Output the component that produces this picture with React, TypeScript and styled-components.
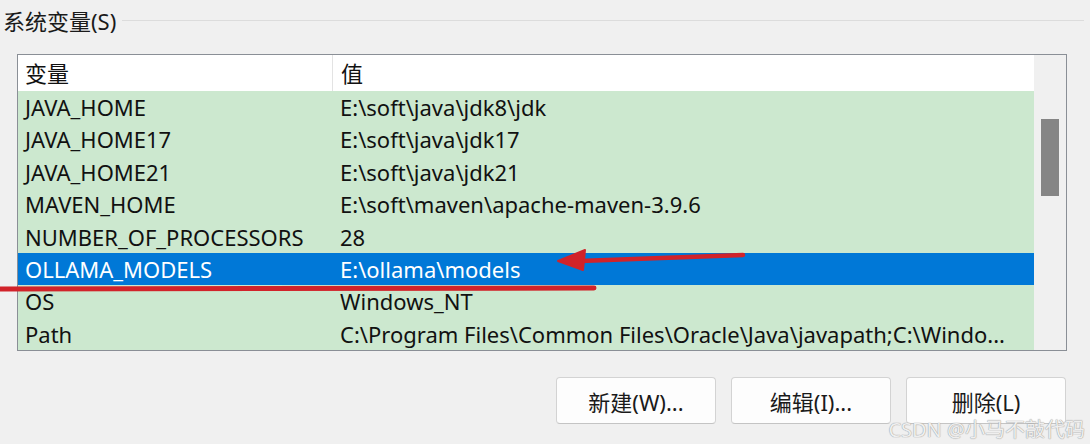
import React from "react";
import styled, { createGlobalStyle } from "styled-components";

const GlobalStyle = createGlobalStyle`
  html, body {
    margin: 0;
    padding: 0;
    background: #f0f0f0;
    width: 1090px;
    height: 444px;
    overflow: hidden;
  }
  * { box-sizing: border-box; }
`;

const FONT = `"Noto Sans", "Noto Sans CJK SC", sans-serif`;

const Page = styled.div`
  position: relative;
  width: 1090px;
  height: 444px;
  padding-top: 7px;
  font-family: ${FONT};
  color: #000;
`;

const GroupHeader = styled.div`
  display: flex;
  align-items: center;
  height: 28px;
  padding-left: 3px;
  padding-right: 6px;
`;

const GroupLabel = styled.span`
  font-size: 22px;
  line-height: 28px;
  color: #1a1a1a;
  white-space: nowrap;
`;

const GroupLine = styled.div`
  flex: 1;
  height: 1px;
  margin-left: 6px;
  margin-top: -2px;
  background: #dcdcdc;
`;

const ListBox = styled.div`
  display: flex;
  margin: 19px 0 0 17px;
  width: 1050px;
  height: 297px;
  border: 1px solid #8a8f96;
  background: #f0f0f0;
`;

const Table = styled.div`
  flex: 1;
  min-width: 0;
  display: flex;
  flex-direction: column;
  background: #cce8cf;
  overflow: hidden;
`;

const HeaderRow = styled.div`
  display: grid;
  grid-template-columns: 314px minmax(0, 1fr);
  height: 36px;
  background: #fff;
  flex-shrink: 0;
`;

const HeaderCell = styled.div<{ $divider?: boolean }>`
  padding-left: ${(p) => (p.$divider ? "8px" : "7px")};
  font-size: 22px;
  line-height: 36px;
  border-left: ${(p) => (p.$divider ? "1px solid #e3e3e3" : "none")};
  color: #111;
`;

const Row = styled.div<{ $selected?: boolean }>`
  display: grid;
  grid-template-columns: 314px minmax(0, 1fr);
  height: 32.375px;
  flex-shrink: 0;
  background: ${(p) => (p.$selected ? "#0078d7" : "transparent")};
  color: ${(p) => (p.$selected ? "#fff" : "#111")};
`;

const Cell = styled.div<{ $second?: boolean }>`
  padding-left: ${(p) => (p.$second ? "8px" : "7px")};
  padding-right: 8px;
  font-size: 22px;
  line-height: 32px;
  white-space: nowrap;
`;

const Scrollbar = styled.div`
  width: 32px;
  flex-shrink: 0;
  background: #f0f0f0;
  padding: 64px 7px 0 7px;
`;

const Thumb = styled.div`
  height: 77px;
  background: #858585;
`;

const ButtonRow = styled.div`
  display: flex;
  justify-content: flex-end;
  gap: 15px;
  margin-top: 26px;
  padding-right: 24px;
`;

const Button = styled.button`
  width: 160px;
  height: 47px;
  background: #fdfdfd;
  border: 1px solid #d3d3d3;
  border-bottom-color: #c4c4c4;
  border-radius: 4px;
  font-family: ${FONT};
  font-size: 22px;
  color: #1a1a1a;
  padding: 0;
`;

const Annotations = styled.svg`
  position: absolute;
  left: 0;
  top: 0;
  width: 1090px;
  height: 444px;
  pointer-events: none;
`;

const Watermark = styled.div`
  position: absolute;
  right: 5px;
  bottom: 2px;
  font-family: ${FONT};
  font-size: 20px;
  line-height: 24px;
  color: #efefef;
  text-shadow: 0 0 1px #9c9c9c, 0 0 1px #9c9c9c;
  white-space: nowrap;
`;

const rows: [string, string][] = [
  ["JAVA_HOME", "E:\\soft\\java\\jdk8\\jdk"],
  ["JAVA_HOME17", "E:\\soft\\java\\jdk17"],
  ["JAVA_HOME21", "E:\\soft\\java\\jdk21"],
  ["MAVEN_HOME", "E:\\soft\\maven\\apache-maven-3.9.6"],
  ["NUMBER_OF_PROCESSORS", "28"],
  ["OLLAMA_MODELS", "E:\\ollama\\models"],
  ["OS", "Windows_NT"],
  ["Path", "C:\\Program Files\\Common Files\\Oracle\\Java\\javapath;C:\\Windo..."],
];

export default function App() {
  return (
    <>
      <GlobalStyle />
      <Page>
        <GroupHeader>
          <GroupLabel>系统变量(S)</GroupLabel>
          <GroupLine />
        </GroupHeader>
        <ListBox>
          <Table>
            <HeaderRow>
              <HeaderCell>变量</HeaderCell>
              <HeaderCell $divider>值</HeaderCell>
            </HeaderRow>
            {rows.map(([k, v]) => (
              <Row key={k} $selected={k === "OLLAMA_MODELS"}>
                <Cell>{k}</Cell>
                <Cell $second>{v}</Cell>
              </Row>
            ))}
          </Table>
          <Scrollbar>
            <Thumb />
          </Scrollbar>
        </ListBox>
        <ButtonRow>
          <Button>新建(W)...</Button>
          <Button>编辑(I)...</Button>
          <Button>删除(L)</Button>
        </ButtonRow>
        <Annotations viewBox="0 0 1090 444">
          <path d="M -2 289 L 594 288" stroke="#d1232a" strokeWidth="5" strokeLinecap="round" fill="none" />
          <path d="M 743 255 L 580 261" stroke="#d1232a" strokeWidth="4.5" strokeLinecap="round" fill="none" />
          <path d="M 558 261 L 585 250 L 583 270 Z" fill="#d1232a" stroke="#d1232a" strokeWidth="2" strokeLinejoin="round" />
        </Annotations>
        <Watermark>CSDN @小马不敲代码</Watermark>
      </Page>
    </>
  );
}
